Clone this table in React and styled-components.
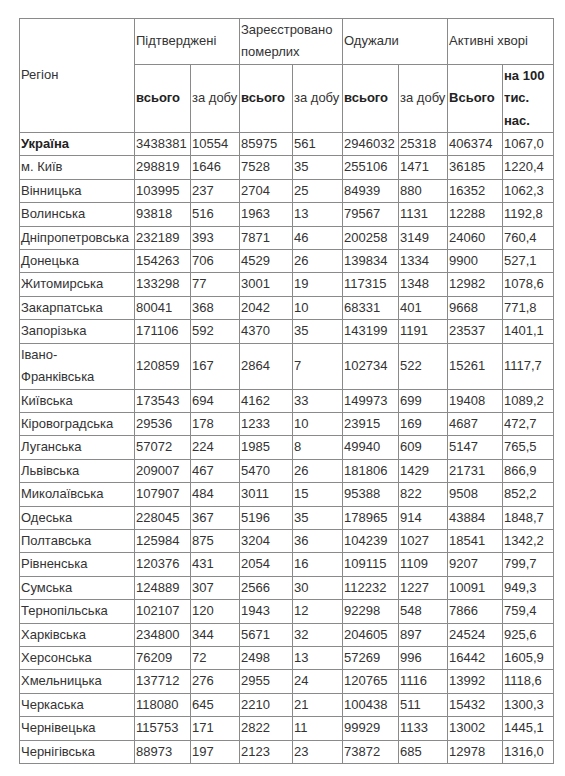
import React from "react";
import styled, { createGlobalStyle } from "styled-components";

const GlobalStyle = createGlobalStyle`
  body {
    margin: 0;
    background: #fff;
  }
`;

const Page = styled.div`
  padding: 18px 0 0 19px;
`;

const Table = styled.table`
  border-collapse: collapse;
  table-layout: fixed;
  width: 535px;
  font-family: "Liberation Sans", Arial, sans-serif;
  font-size: 13px;
  line-height: 22.4px;
  color: #333;
`;

const Cell = styled.td`
  border: 1px solid #8a8a8a;
  padding: 0 0 0 1px;
  vertical-align: middle;
  text-align: left;
  white-space: ${props => (props.$wrap ? "normal" : "nowrap")};
  overflow: hidden;
  font-weight: ${props => (props.$bold ? 700 : 400)};
  color: ${props => (props.$bold ? "#222" : "#333")};
`;

const widths = [115, 56, 49, 53, 50, 56, 49, 55, 51];

const rows = [
  ["Україна", "3438381", "10554", "85975", "561", "2946032", "25318", "406374", "1067,0"],
  ["м. Київ", "298819", "1646", "7528", "35", "255106", "1471", "36185", "1220,4"],
  ["Вінницька", "103995", "237", "2704", "25", "84939", "880", "16352", "1062,3"],
  ["Волинська", "93818", "516", "1963", "13", "79567", "1131", "12288", "1192,8"],
  ["Дніпропетровська", "232189", "393", "7871", "46", "200258", "3149", "24060", "760,4"],
  ["Донецька", "154263", "706", "4529", "26", "139834", "1334", "9900", "527,1"],
  ["Житомирська", "133298", "77", "3001", "19", "117315", "1348", "12982", "1078,6"],
  ["Закарпатська", "80041", "368", "2042", "10", "68331", "401", "9668", "771,8"],
  ["Запорізька", "171106", "592", "4370", "35", "143199", "1191", "23537", "1401,1"],
  ["Івано-Франківська", "120859", "167", "2864", "7", "102734", "522", "15261", "1117,7"],
  ["Київська", "173543", "694", "4162", "33", "149973", "699", "19408", "1089,2"],
  ["Кіровоградська", "29536", "178", "1233", "10", "23915", "169", "4687", "472,7"],
  ["Луганська", "57072", "224", "1985", "8", "49940", "609", "5147", "765,5"],
  ["Львівська", "209007", "467", "5470", "26", "181806", "1429", "21731", "866,9"],
  ["Миколаївська", "107907", "484", "3011", "15", "95388", "822", "9508", "852,2"],
  ["Одеська", "228045", "367", "5196", "35", "178965", "914", "43884", "1848,7"],
  ["Полтавська", "125984", "875", "3204", "36", "104239", "1027", "18541", "1342,2"],
  ["Рівненська", "120376", "431", "2054", "16", "109115", "1109", "9207", "799,7"],
  ["Сумська", "124889", "307", "2566", "30", "112232", "1227", "10091", "949,3"],
  ["Тернопільська", "102107", "120", "1943", "12", "92298", "548", "7866", "759,4"],
  ["Харківська", "234800", "344", "5671", "32", "204605", "897", "24524", "925,6"],
  ["Херсонська", "76209", "72", "2498", "13", "57269", "996", "16442", "1605,9"],
  ["Хмельницька", "137712", "276", "2955", "24", "120765", "1116", "13992", "1118,6"],
  ["Черкаська", "118080", "645", "2210", "21", "100438", "511", "15432", "1300,3"],
  ["Чернівецька", "115753", "171", "2822", "11", "99929", "1133", "13002", "1445,1"],
  ["Чернігівська", "88973", "197", "2123", "23", "73872", "685", "12978", "1316,0"]
];

// region names with a hyphen break after it, as in the source table
function regionLabel(name) {
  if (!name.includes("-")) return name;
  const [first, rest] = name.split("-");
  return (
    <>
      {first}-
      <br />
      {rest}
    </>
  );
}

export default function App() {
  return (
    <>
      <GlobalStyle />
      <Page>
        <Table>
          <colgroup>
            {widths.map((w, i) => (
              <col key={i} style={{ width: w }} />
            ))}
          </colgroup>
          <thead>
            <tr>
              <Cell as="th" rowSpan={2}>Регіон</Cell>
              <Cell as="th" colSpan={2}>Підтверджені</Cell>
              <Cell as="th" colSpan={2} $wrap>
                Зареєстровано померлих
              </Cell>
              <Cell as="th" colSpan={2}>Одужали</Cell>
              <Cell as="th" colSpan={2}>Активні хворі</Cell>
            </tr>
            <tr>
              <Cell as="th" $bold>всього</Cell>
              <Cell as="th">за добу</Cell>
              <Cell as="th" $bold>всього</Cell>
              <Cell as="th">за добу</Cell>
              <Cell as="th" $bold>всього</Cell>
              <Cell as="th">за добу</Cell>
              <Cell as="th" $bold>Всього</Cell>
              <Cell as="th" $bold $wrap>
                на 100 тис. нас.
              </Cell>
            </tr>
          </thead>
          <tbody>
            {rows.map((r, i) => (
              <tr key={r[0]}>
                {r.map((v, j) => (
                  <Cell key={j} $bold={i === 0 && j === 0}>
                    {j === 0 ? regionLabel(v) : v}
                  </Cell>
                ))}
              </tr>
            ))}
          </tbody>
        </Table>
      </Page>
    </>
  );
}
